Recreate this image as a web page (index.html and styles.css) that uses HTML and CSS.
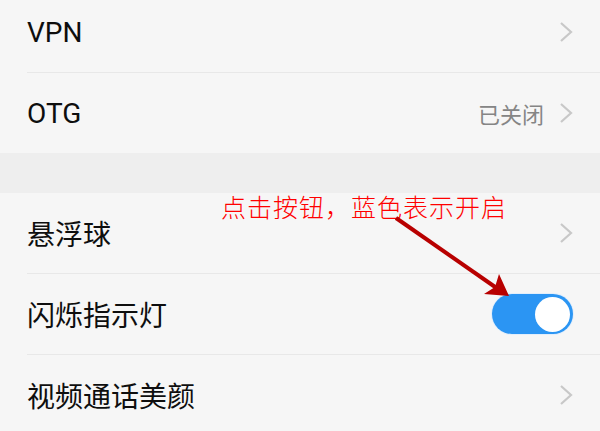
FILE: index.html
```html
<!DOCTYPE html>
<html lang="zh-CN">
  <head>
    <meta charset="UTF-8" />
    <meta name="viewport" content="width=device-width, initial-scale=1.0" />
    <title>设置</title>
    <link rel="stylesheet" href="styles.css">
  </head>
  <body>
    <div class="settings">
      <div class="group">
        <div class="row first">
          <span class="label">VPN</span>
          <svg class="chevron" viewBox="0 0 14 22"><polyline points="2,2 12,11 2,20" /></svg>
        </div>
        <div class="row last">
          <span class="label">OTG</span>
          <span class="value">已关闭</span>
          <svg class="chevron" viewBox="0 0 14 22"><polyline points="2,2 12,11 2,20" /></svg>
        </div>
      </div>

      <div class="spacer"></div>

      <div class="group">
        <div class="row">
          <span class="label">悬浮球</span>
          <svg class="chevron" viewBox="0 0 14 22"><polyline points="2,2 12,11 2,20" /></svg>
        </div>
        <div class="row">
          <span class="label">闪烁指示灯</span>
          <span class="switch on"><span class="knob"></span></span>
        </div>
        <div class="row last">
          <span class="label">视频通话美颜</span>
          <svg class="chevron" viewBox="0 0 14 22"><polyline points="2,2 12,11 2,20" /></svg>
        </div>
      </div>
    </div>

    <div class="note">点击按钮，蓝色表示开启</div>
    <svg class="arrow" viewBox="0 0 600 431">
      <line x1="396" y1="218" x2="498" y2="289" />
      <polygon points="509,296 484,294 495,287 499,274" />
    </svg>
  </body>
</html>
```

FILE: styles.css
```css
body {
  margin: 0;
  background-color: #f6f6f6;
  font-family: Roboto, "Noto Sans CJK SC", sans-serif;
  color: #0e0e0e;
  overflow: hidden;
}
.settings {
  margin-top: -8px;
}
.row {
  display: flex;
  align-items: center;
  height: 80px;
  margin-left: 27px;
  padding-right: 27px;
  border-bottom: 1px solid #e8e8e8;
}
.row.last {
  border-bottom: none;
}
.label {
  flex: 1;
  font-size: 28px;
}
.value {
  font-size: 22px;
  color: #858585;
  margin-right: 15px;
}
.chevron {
  width: 14px;
  height: 22px;
}
.chevron polyline {
  fill: none;
  stroke: #c8c8c8;
  stroke-width: 2.2;
}
.spacer {
  height: 40px;
  background-color: #eeeeee;
}
.switch {
  width: 81px;
  height: 40px;
  border-radius: 20px;
  background-color: #2b95f3;
  box-shadow: 0 0 0 1px #e2eefb;
  display: flex;
  align-items: center;
  justify-content: flex-end;
  padding-right: 3px;
  box-sizing: border-box;
}
.knob {
  width: 35px;
  height: 35px;
  border-radius: 50%;
  background-color: #ffffff;
}
.note {
  position: absolute;
  left: 221px;
  top: 193px;
  font-family: "Noto Sans CJK SC", sans-serif;
  font-size: 25px;
  line-height: 26px;
  letter-spacing: 1px;
  font-weight: 300;
  color: #ff0000;
}
.arrow {
  position: absolute;
  left: 0;
  top: 0;
  width: 600px;
  height: 431px;
}
.arrow line {
  stroke: #b80000;
  stroke-width: 4;
}
.arrow polygon {
  fill: #b80000;
}
```
